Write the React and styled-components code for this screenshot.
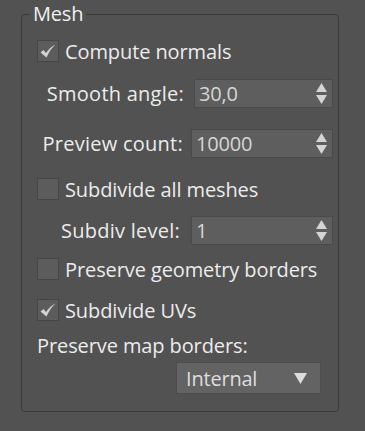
import React from "react";
import styled, { createGlobalStyle } from "styled-components";

const GlobalStyle = createGlobalStyle`
  html, body {
    margin: 0;
    padding: 0;
    background: #525252;
  }
  body {
    font-family: "Open Sans", "Noto Sans", sans-serif;
    color: #ececec;
  }
`;

const Page = styled.div`
  width: 365px;
  height: 431px;
  padding: 6px 0 0 21px;
  box-sizing: border-box;
`;

const Group = styled.fieldset`
  width: 318px;
  height: 406px;
  box-sizing: border-box;
  margin: 0;
  padding: 0 5px 0 15px;
  border: 1px solid #393939;
  border-radius: 4px;
  display: flex;
  flex-direction: column;
`;

const Legend = styled.legend`
  margin-left: -7px;
  padding: 0 3px;
  font-size: 20px;
  line-height: 16px;
  letter-spacing: -0.2px;
  color: #f0f0f0;
`;

const CheckRow = styled.label`
  display: flex;
  align-items: center;
  gap: 6px;
  height: 22px;
  margin-top: ${p => p.$top}px;
  font-size: 20px;
  letter-spacing: -0.1px;
`;

const Box = styled.span`
  width: 20px;
  height: 20px;
  flex: none;
  background: #5c5c5c;
  border: 1px solid #464646;
  display: flex;
  align-items: center;
  justify-content: center;
`;

const FieldRow = styled.div`
  display: flex;
  align-items: center;
  justify-content: flex-end;
  height: 29px;
  margin-top: ${p => p.$top}px;
  font-size: 20px;
`;

const FieldLabel = styled.span`
  margin-right: ${p => p.$gap}px;
  letter-spacing: 0.25px;
`;

const Spinner = styled.div`
  width: ${p => p.$width}px;
  height: 29px;
  box-sizing: border-box;
  background: #5e5e5e;
  border: 1px solid #4a4a4a;
  display: flex;
  align-items: center;
  justify-content: space-between;
  padding: 0 5px 0 4px;
  color: #d6d6d6;
  letter-spacing: -0.2px;
`;

const Arrows = styled.div`
  display: flex;
  flex-direction: column;
  gap: 3px;
`;

const PlainLabel = styled.div`
  margin-top: 13px;
  font-size: 20px;
  line-height: 24px;
  letter-spacing: -0.1px;
`;

const DropRow = styled.div`
  display: flex;
  justify-content: flex-end;
  padding-right: 12px;
  margin-top: 4px;
`;

const Dropdown = styled.div`
  width: 145px;
  height: 32px;
  box-sizing: border-box;
  background: #636363;
  border: 1px solid #4d4d4d;
  display: flex;
  align-items: center;
  justify-content: space-between;
  padding: 0 13px 0 9px;
  font-size: 20px;
  letter-spacing: -0.2px;
  color: #dedede;
`;

const Check = ({ checked }) => (
  <Box>
    {checked && (
      <svg width="16" height="15" viewBox="0 0 16 15">
        <path
          d="M0.5 8.5 L3.5 6 L6 9 C8.5 5.5 11 2.5 15.5 0.5 C11.5 4 9 8 6.5 13.5 Z"
          fill="#d2d2d2"
        />
      </svg>
    )}
  </Box>
);

const SpinArrows = () => (
  <Arrows>
    <svg width="11" height="9" viewBox="0 0 11 9">
      <path d="M5.5 0 L11 9 L0 9 Z" fill="#d4d4d4" />
    </svg>
    <svg width="11" height="9" viewBox="0 0 11 9">
      <path d="M0 0 L11 0 L5.5 9 Z" fill="#d4d4d4" />
    </svg>
  </Arrows>
);

const App = () => {
  return (
    <Page>
      <GlobalStyle />
      <Group>
        <Legend>Mesh</Legend>
        <CheckRow $top={18}>
          <Check checked />
          Compute normals
        </CheckRow>
        <FieldRow $top={17}>
          <FieldLabel $gap={10}>Smooth angle:</FieldLabel>
          <Spinner $width={139}>
            30,0
            <SpinArrows />
          </Spinner>
        </FieldRow>
        <FieldRow $top={21}>
          <FieldLabel $gap={8}>Preview count:</FieldLabel>
          <Spinner $width={142}>
            10000
            <SpinArrows />
          </Spinner>
        </FieldRow>
        <CheckRow $top={20}>
          <Check />
          Subdivide all meshes
        </CheckRow>
        <FieldRow $top={16}>
          <FieldLabel $gap={11}>Subdiv level:</FieldLabel>
          <Spinner $width={142}>
            1
            <SpinArrows />
          </Spinner>
        </FieldRow>
        <CheckRow $top={13}>
          <Check />
          Preserve geometry borders
        </CheckRow>
        <CheckRow $top={19}>
          <Check checked />
          Subdivide UVs
        </CheckRow>
        <PlainLabel>Preserve map borders:</PlainLabel>
        <DropRow>
          <Dropdown>
            Internal
            <svg width="13" height="11" viewBox="0 0 13 11">
              <path d="M0 0 L13 0 L6.5 11 Z" fill="#dcdcdc" />
            </svg>
          </Dropdown>
        </DropRow>
      </Group>
    </Page>
  );
};

export default App;
